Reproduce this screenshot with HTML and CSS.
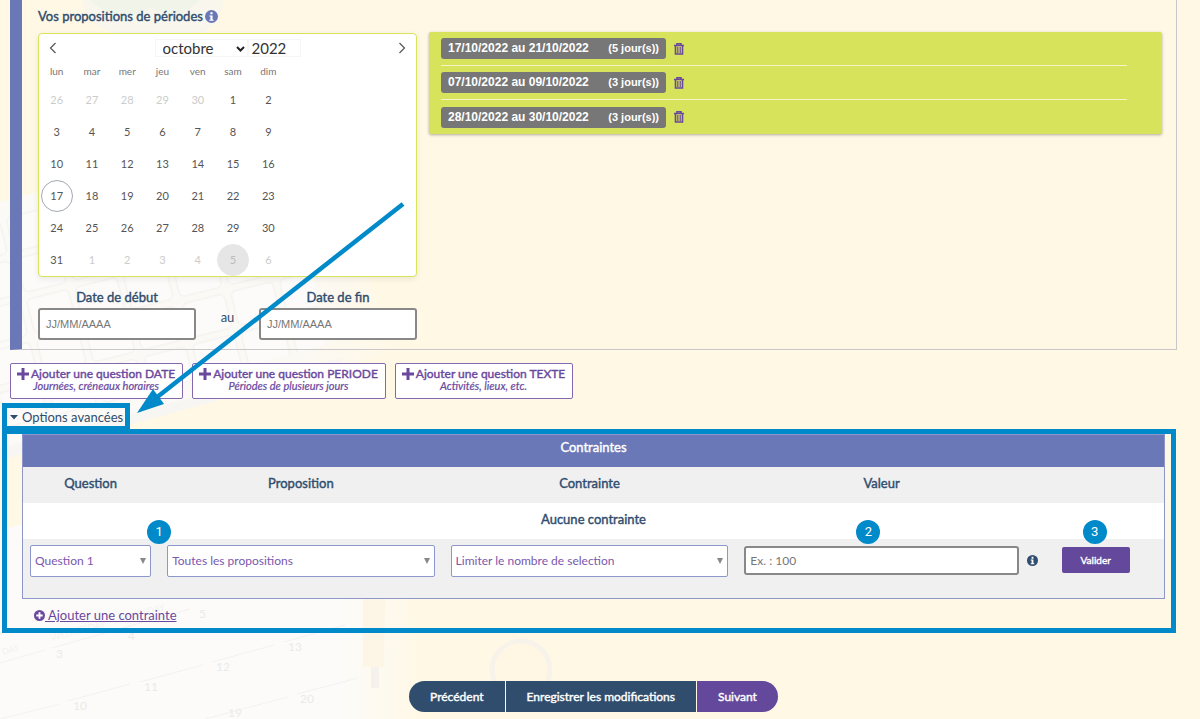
FILE: index.html
```
<!DOCTYPE html>
<html lang="fr">
<head>
<meta charset="utf-8">
<title>Propositions de périodes</title>
<link rel="stylesheet" href="styles.css">
</head>
<body>
<div class="page">
  <svg class="backdrop" width="700" height="719" viewBox="0 0 700 719" aria-hidden="true">
    <defs>
      <linearGradient id="fade" x1="0" x2="1"><stop offset="0" stop-color="#fcfbf9"/><stop offset=".8" stop-color="#fcfbf9"/><stop offset="1" stop-color="#fff8e5"/></linearGradient>
      <linearGradient id="board" x1="0" x2="1"><stop offset="0" stop-color="#fbfaf7"/><stop offset=".75" stop-color="#fbf9f4"/><stop offset="1" stop-color="#fff8e5"/></linearGradient>
      <pattern id="keys" width="50" height="42" patternUnits="userSpaceOnUse" patternTransform="rotate(-14)"><rect x="3" y="3" width="43" height="35" rx="5" fill="#fcfbf9" stroke="#f1efec"/></pattern>
    </defs>
    <path d="M82 0Q88 32 135 38H190Q222 28 223 0Z" fill="#f9f6ee"/>
    <path d="M90 0Q120 28 150 8L175 20L200 0Z" fill="#f1f4e9"/>
    <path d="M0 202L300 125L400 350L0 458Z" fill="url(#board)"/>
    <path d="M0 215L290 140L325 345L0 432Z" fill="url(#keys)"/>
    <path d="M0 448L340 358L345 366L0 460Z" fill="#f8f6f2"/>
    <path d="M0 530L200 480H392L425 719H0Z" fill="url(#fade)"/>
    <g stroke="#f3f2f0" fill="none"><path d="M0 663L45 650M52 648L190 609M0 719L60 704M68 701L130 684M140 682L203 665M212 662L274 645M284 642L345 625M205 719L288 697M297 694L358 678"/></g>
    <g class="dates"><text x="56" y="658">3</text><text x="128" y="640">4</text><text x="199" y="618">5</text><text x="73" y="710">10</text><text x="144" y="691">11</text><text x="216" y="671">12</text><text x="288" y="651">13</text><text x="300" y="703">20</text><text x="228" y="717">19</text></g>
    <g class="weekdays"><text transform="translate(52 641) rotate(-15)">WEDNESDAY</text><text transform="translate(120 622) rotate(-15)">THURSDAY</text><text transform="translate(3 655) rotate(-15)">DAY</text></g>
    <path d="M363 540H386L384 667H363Z" fill="#fdf6e6"/><path d="M371 667H379V688H371Z" fill="#f5f2ed"/>
    <circle cx="521" cy="670" r="29" fill="#fff6e4" stroke="#f8f3ea" stroke-width="5"/>
  </svg>

  <section class="question">
    <h2 class="question-title">Vos propositions de périodes
      <svg class="info" viewBox="0 0 12 12" aria-hidden="true"><circle cx="6" cy="6" r="6"/><path d="M5 2h2v2H5zM4 5h3v4h1v1H4V9h1V6H4z" fill="#fff"/></svg>
    </h2>
    <div class="question-body">
      <div class="picker">
        <div class="calendar">
          <div class="cal-head">
            <button class="cal-arrow" type="button" aria-label="Mois précédent"><svg width="8" height="12" viewBox="0 0 8 12"><path d="M6.500 1L1.500 6L6.500 11"/></svg></button>
            <div class="cal-month">
              <select class="month" aria-label="Mois"><option>octobre</option></select>
              <svg class="chevron" width="9" height="6" viewBox="0 0 9 6" aria-hidden="true"><path d="M1 1L4.500 4.500L8 1"/></svg>
              <input class="year" type="text" value="2022" aria-label="Année">
            </div>
            <button class="cal-arrow" type="button" aria-label="Mois suivant"><svg width="8" height="12" viewBox="0 0 8 12"><path d="M1.500 1L6.500 6L1.500 11"/></svg></button>
          </div>
          <table class="days">
            <thead><tr><th>lun</th><th>mar</th><th>mer</th><th>jeu</th><th>ven</th><th>sam</th><th>dim</th></tr></thead>
            <tbody>
              <tr><td class="out">26</td><td class="out">27</td><td class="out">28</td><td class="out">29</td><td class="out">30</td><td>1</td><td>2</td></tr>
              <tr><td>3</td><td>4</td><td>5</td><td>6</td><td>7</td><td>8</td><td>9</td></tr>
              <tr><td>10</td><td>11</td><td>12</td><td>13</td><td>14</td><td>15</td><td>16</td></tr>
              <tr><td><span class="day today">17</span></td><td>18</td><td>19</td><td>20</td><td>21</td><td>22</td><td>23</td></tr>
              <tr><td>24</td><td>25</td><td>26</td><td>27</td><td>28</td><td>29</td><td>30</td></tr>
              <tr><td>31</td><td class="out">1</td><td class="out">2</td><td class="out">3</td><td class="out">4</td><td class="out"><span class="day hover">5</span></td><td class="out">6</td></tr>
            </tbody>
          </table>
        </div>
        <div class="range">
          <div class="field"><label for="start">Date de début</label><input id="start" type="text" placeholder="JJ/MM/AAAA"></div>
          <span class="range-sep">au</span>
          <div class="field"><label for="end">Date de fin</label><input id="end" type="text" placeholder="JJ/MM/AAAA"></div>
        </div>
      </div>
      <ul class="periods">
        <li><span class="period">17/10/2022 au 21/10/2022 <span class="count">(5 jour(s))</span></span><button class="trash" type="button" aria-label="Supprimer"><svg width="10" height="12" viewBox="0 0 10 12"><path class="bin" d="M0 2.500h10M3 2V.8h4V2M1.500 3v8h7V3"/><path d="M3.500 4v6M5 4v6M6.500 4v6"/></svg></button></li>
        <li><span class="period">07/10/2022 au 09/10/2022 <span class="count">(3 jour(s))</span></span><button class="trash" type="button" aria-label="Supprimer"><svg width="10" height="12" viewBox="0 0 10 12"><path class="bin" d="M0 2.500h10M3 2V.8h4V2M1.500 3v8h7V3"/><path d="M3.500 4v6M5 4v6M6.500 4v6"/></svg></button></li>
        <li><span class="period">28/10/2022 au 30/10/2022 <span class="count">(3 jour(s))</span></span><button class="trash" type="button" aria-label="Supprimer"><svg width="10" height="12" viewBox="0 0 10 12"><path class="bin" d="M0 2.500h10M3 2V.8h4V2M1.500 3v8h7V3"/><path d="M3.500 4v6M5 4v6M6.500 4v6"/></svg></button></li>
      </ul>
    </div>
  </section>

  <div class="add-row">
    <button class="add" type="button"><span><svg width="12" height="12" viewBox="0 0 12 12" aria-hidden="true"><path d="M4.500 0h3v4.500H12v3H7.500V12h-3V7.500H0v-3h4.500z"/></svg>Ajouter une question DATE</span><em>Journées, créneaux horaires</em></button>
    <button class="add" type="button"><span><svg width="12" height="12" viewBox="0 0 12 12" aria-hidden="true"><path d="M4.500 0h3v4.500H12v3H7.500V12h-3V7.500H0v-3h4.500z"/></svg>Ajouter une question PERIODE</span><em>Périodes de plusieurs jours</em></button>
    <button class="add" type="button"><span><svg width="12" height="12" viewBox="0 0 12 12" aria-hidden="true"><path d="M4.500 0h3v4.500H12v3H7.500V12h-3V7.500H0v-3h4.500z"/></svg>Ajouter une question TEXTE</span><em>Activités, lieux, etc.</em></button>
  </div>

  <button class="options" type="button"><svg width="8" height="5" viewBox="0 0 8 5" aria-hidden="true"><path d="M0 0h8L4 4.500z"/></svg>Options avancées</button>

  <section class="advanced">
    <table class="constraints">
      <caption>Contraintes</caption>
      <colgroup><col class="c-question"><col class="c-proposition"><col class="c-contrainte"><col class="c-valeur"><col></colgroup>
      <thead><tr><th>Question</th><th>Proposition</th><th>Contrainte</th><th>Valeur</th><th></th></tr></thead>
      <tbody>
        <tr class="empty"><td colspan="5">Aucune contrainte</td></tr>
        <tr class="entry">
          <td><select class="choice" aria-label="Question"><option>Question 1</option></select><span class="step step-corner">1</span></td>
          <td><select class="choice" aria-label="Proposition"><option>Toutes les propositions</option></select></td>
          <td><select class="choice" aria-label="Contrainte"><option>Limiter le nombre de selection</option></select></td>
          <td><input class="value" type="text" placeholder="Ex. : 100" aria-label="Valeur"><span class="step step-value">2</span></td>
          <td class="actions"><div class="submit"><svg class="info dark" viewBox="0 0 12 12" aria-hidden="true"><circle cx="6" cy="6" r="6"/><path d="M5 2h2v2H5zM4 5h3v4h1v1H4V9h1V6H4z" fill="#fff"/></svg><button class="validate" type="button">Valider</button></div><span class="step step-submit">3</span></td>
        </tr>
      </tbody>
    </table>
    <a class="add-link" href="#"><svg width="11" height="11" viewBox="0 0 12 12" aria-hidden="true"><circle cx="6" cy="6" r="6"/><path d="M5 2.500h2V5h2.500v2H7v2.500H5V7H2.500V5H5z" fill="#fff"/></svg> Ajouter une contrainte</a>
  </section>

  <nav class="steps">
    <button type="button">Précédent</button><button type="button">Enregistrer les modifications</button><button class="next" type="button">Suivant</button>
  </nav>

  <svg class="arrow" width="420" height="420" viewBox="0 0 420 420" aria-hidden="true"><path d="M403 204L156 398" stroke="#008ac9" stroke-width="4.500"/><path d="M137 413L153 389L164 404Z" fill="#008ac9"/></svg>
</div>
</body>
</html>
```
FILE: styles.css
```
* { box-sizing: border-box; }
body { margin: 0; background: #fff8e5; color: #2f4d6e; font-family: Lato, "Liberation Sans", sans-serif; font-size: 13px; line-height: 16px; }
button, input, select { font: inherit; color: inherit; margin: 0; }
button { cursor: pointer; }
.page { position: relative; z-index: 0; overflow: hidden; padding: 0 23px 8px 10px; }
.backdrop { position: absolute; left: 0; top: 0; z-index: -1; }
.dates { fill: #ebeae8; font-size: 12px; }
.weekdays { fill: #f3f2f0; font-size: 9px; }

.question-title, .field label, .add, .constraints caption, .constraints th, .empty td, .validate, .steps button { font-weight: 400; -webkit-text-stroke: .4px currentColor; }

.question { border: 1px solid #c9c7c9; border-top: 0; border-left: 12px solid #6b78b7; padding: 8px 14px 9px 16px; }
.question-title { margin: 0 0 9px; font-size: 13px; line-height: 16px; display: flex; align-items: center; gap: 2px; }
.info { width: 13px; height: 13px; fill: #6b78b7; flex: none; }
.info.dark { width: 11px; height: 11px; fill: #2f4d6e; }
.question-body { display: grid; grid-template-columns: 379px 1fr; gap: 12px; align-items: start; }

.calendar { background: #fff; border: 1px solid #d7e35b; border-radius: 4px; box-shadow: 0 2px 6px rgba(0, 0, 0, .08); color: #555; }
.cal-head { display: flex; justify-content: space-between; align-items: center; height: 28px; padding: 0 10px; }
.cal-arrow { border: 0; background: none; padding: 0; width: 8px; height: 12px; }
.cal-arrow svg { display: block; fill: none; stroke: #555; stroke-width: 1.200; }
.cal-month { display: flex; align-items: center; position: relative; font-size: 15px; color: #333; }
.month, .year { border: 1px solid #f6f6f6; background: none; height: 18px; line-height: 16px; outline: 0; }
.month { appearance: none; width: 93px; padding: 0 7px; }
.chevron { position: absolute; left: 81px; top: 7px; fill: none; stroke: #222; stroke-width: 2; }
.year { width: 53px; padding: 0 3px; }
.days { border-collapse: collapse; table-layout: fixed; width: 247px; font-size: 11px; text-align: center; }
.days th { padding: 0; height: 22px; font-size: 10px; color: #777; font-weight: 400; line-height: 18px; vertical-align: top; }
.days td { padding: 0; height: 32px; }
.days .out { color: #ccc; }
.day { display: block; width: 32px; height: 32px; line-height: 30px; margin: 0 auto; border: 1px solid transparent; border-radius: 50%; }
.today { border-color: #a4a9b5; }
.hover { background: #e6e6e6; border-color: #e6e6e6; color: #bbb; }

.range { display: flex; justify-content: space-between; align-items: center; padding-top: 12px; }
.field { width: 158px; text-align: center; }
.field label { display: block; line-height: 17px; margin-bottom: 2px; }
.field input, .value { display: block; width: 100%; border: 2px solid #888; border-radius: 3px; background: #fff; }
.field input { height: 32px; padding: 0 6px; font-family: "Liberation Sans", sans-serif; font-size: 11px; }
::placeholder { color: #777; opacity: 1; }
.range-sep { padding-top: 4px; }

.periods { list-style: none; margin: -1px 0 0; padding: 0 35px 0 12px; background: #d7e35b; box-shadow: 0 1px 3px rgba(0, 0, 0, .3); border-radius: 2px; }
.periods li { display: flex; align-items: center; gap: 8px; height: 34px; border-bottom: 1px solid #f3f5c4; }
.periods li:last-child { border-bottom: 0; }
.period { background: #777; color: #fff; border-radius: 3px; height: 21px; padding: 0 7px; width: 225px; font: 700 12px/21px "Liberation Sans", sans-serif; display: flex; justify-content: space-between; white-space: nowrap; }
.count { font-size: 11px; }
.trash { border: 0; background: none; padding: 0; width: 10px; height: 12px; }
.trash svg { display: block; fill: none; stroke: #6a489e; stroke-width: .800; }
.trash .bin { stroke-width: 1.600; }

.add-row { display: flex; gap: 9px; padding-top: 13px; }
.add { background: #fff; border: 1px solid #8468b0; border-radius: 2px; color: #6a489e; padding: 4px 7px 6px 6px; text-align: center; white-space: nowrap; }
.add span { display: flex; align-items: center; gap: 2px; font-size: 12px; line-height: 12px; }
.add em { display: block; font-size: 11px; line-height: 12px; -webkit-text-stroke-width: .2px; }
.add svg { fill: #6a489e; stroke: none; }

.options { display: flex; align-items: center; gap: 4px; margin: 4px 0 0 -8px; height: 28px; padding: 0 2px 0 3px; border: 5px solid #008ac9; background: none; }
.options svg { fill: #2f4d6e; }
.advanced { margin: -2px 1px 0 -8px; border: 5px solid #008ac9; padding: 0 6px 5px 15px; }
.constraints { width: 100%; border-collapse: collapse; table-layout: fixed; outline: 1px solid #8d97cc; outline-offset: -1px; background: #fff; }
.constraints caption { background: #6b78b7; color: #fff; height: 33px; line-height: 27px; }
.c-question { width: 12%; }
.c-proposition { width: 24.8%; }
.c-contrainte { width: 25.7%; }
.c-valeur { width: 25.4%; }
.constraints thead, .entry { background: #f0f0f0; }
.constraints th, .empty td { height: 36px; padding: 0 0 5px; text-align: center; line-height: 16px; vertical-align: middle; }
.entry td { position: relative; height: 60px; padding: 6px 8px; vertical-align: top; }
.entry .actions { padding-left: 0; }
.choice { appearance: none; display: block; width: 100%; height: 32px; border: 1px solid #8d97cc; border-radius: 2px; padding: 0 4px; font-size: 12px; color: #7a58ad; background: #fff; }
.entry td:has(.choice)::after { content: ""; position: absolute; right: 13px; top: 19px; border: 3px solid transparent; border-top: 6px solid #888; border-bottom: 0; }
.value { height: 29px; margin-top: 1px; padding: 0 4px; font-size: 12px; }
.submit { display: flex; align-items: center; gap: 24px; height: 28px; margin-top: 1px; }
.validate { width: 68px; height: 26px; padding: 0; border: 0; border-radius: 2px; background: #64489c; color: #fff; font-size: 10px; }
.step { position: absolute; top: -19px; width: 24px; height: 24px; border-radius: 50%; background: #008ac9; color: #fff; text-align: center; line-height: 24px; z-index: 1; font-family: Roboto, sans-serif; }
.step-corner { right: -12px; }
.step-value { left: 120px; }
.step-submit { left: 56px; }
.add-link { display: inline-block; margin: 8px 0 0 12px; color: #6a489e; }
.add-link svg { fill: #6a489e; vertical-align: -1px; }

.steps { display: flex; justify-content: center; gap: 1px; margin-top: 48px; }
.steps button { height: 31px; border: 0; padding: 0 21px; background: #304d6d; color: #fff; font-size: 12px; }
.steps button:first-child { border-radius: 16px 0 0 16px; }
.steps .next { background: #64489c; border-radius: 0 16px 16px 0; }
.arrow { position: absolute; left: 0; top: 0; fill: none; pointer-events: none; }
```
